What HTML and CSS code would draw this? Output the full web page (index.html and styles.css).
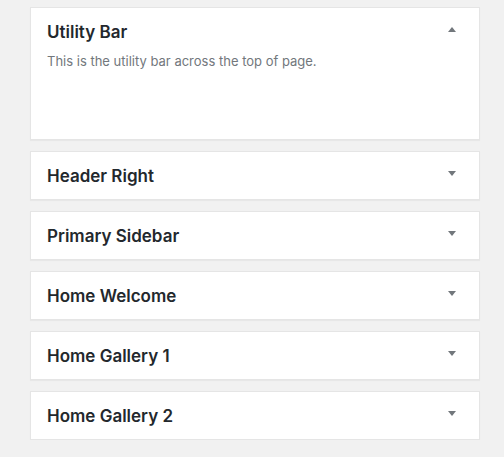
FILE: index.html
```html
<!DOCTYPE html>
<html>
<head>
<meta charset="utf-8">
<link rel="stylesheet" href="styles.css">
</head>
<body>
<div class="sidebar">
  <div class="widget open">
    <div class="widget-top">
      <h3 class="widget-title">Utility Bar</h3>
      <span class="arrow up"></span>
    </div>
    <p class="widget-desc">This is the utility bar across the top of page.</p>
  </div>
  <div class="widget">
    <div class="widget-top">
      <h3 class="widget-title">Header Right</h3>
      <span class="arrow"></span>
    </div>
  </div>
  <div class="widget">
    <div class="widget-top">
      <h3 class="widget-title">Primary Sidebar</h3>
      <span class="arrow"></span>
    </div>
  </div>
  <div class="widget">
    <div class="widget-top">
      <h3 class="widget-title">Home Welcome</h3>
      <span class="arrow"></span>
    </div>
  </div>
  <div class="widget">
    <div class="widget-top">
      <h3 class="widget-title">Home Gallery 1</h3>
      <span class="arrow"></span>
    </div>
  </div>
  <div class="widget">
    <div class="widget-top">
      <h3 class="widget-title">Home Gallery 2</h3>
      <span class="arrow"></span>
    </div>
  </div>
</div>
</body>
</html>
```
FILE: styles.css
```css
html, body {
  margin: 0;
  padding: 0;
  background: #f1f1f1;
}
body {
  font-family: Inter, "Noto Sans", sans-serif;
}
.sidebar {
  width: 450px;
  padding: 7px 0 0 30px;
  display: flex;
  flex-direction: column;
  gap: 11px;
}
.widget {
  background: #fff;
  border: 1px solid #e5e5e5;
  box-shadow: 0 1px 1px rgba(0, 0, 0, 0.04);
  box-sizing: border-box;
}
.widget.open {
  height: 133px;
}
.widget-top {
  height: 47px;
  display: flex;
  align-items: center;
  justify-content: space-between;
  padding: 0 23px 0 16px;
}
.widget-title {
  margin: 0;
  font-size: 17px;
  font-weight: 600;
  color: #23282d;
  line-height: 20px;
  padding-top: 1px;
}
.arrow {
  width: 0;
  height: 0;
  border-left: 4px solid transparent;
  border-right: 4px solid transparent;
  border-top: 5px solid #72777c;
  margin-top: -4px;
}
.arrow.up {
  border-top: 0;
  border-bottom: 5px solid #72777c;
}
.widget-desc {
  margin: -3px 0 0 16px;
  font-size: 13px;
  color: #72777c;
  line-height: 18px;
}
```
